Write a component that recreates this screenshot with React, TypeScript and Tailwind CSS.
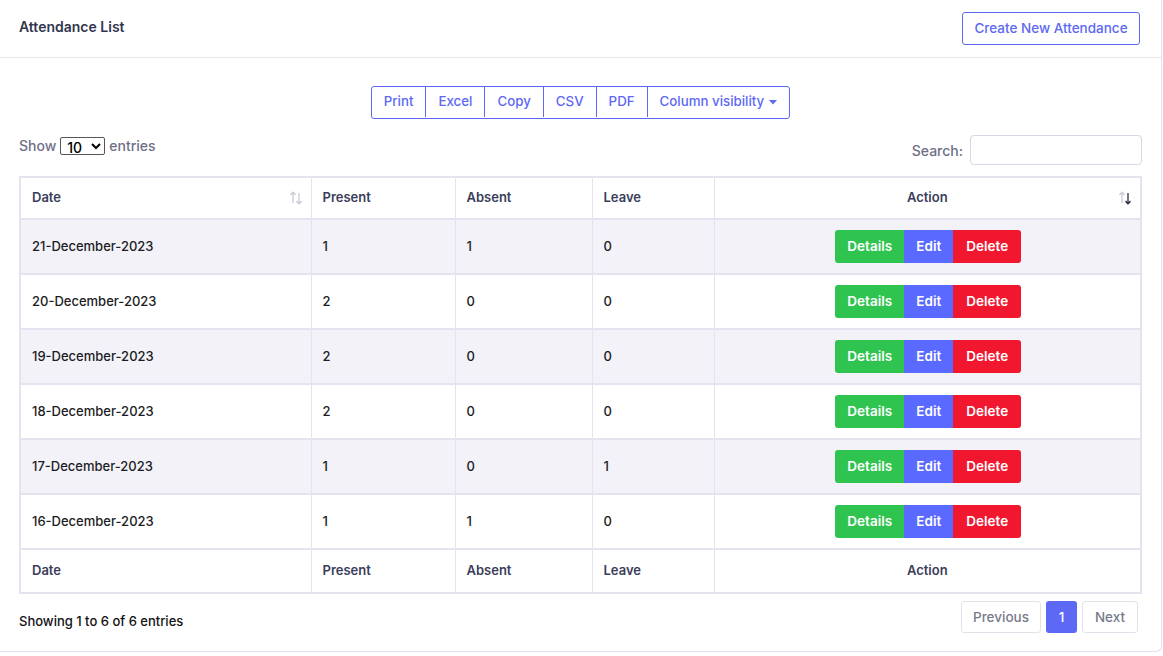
import { useState } from "react";

const rows = [
  { date: "21-December-2023", present: 1, absent: 1, leave: 0 },
  { date: "20-December-2023", present: 2, absent: 0, leave: 0 },
  { date: "19-December-2023", present: 2, absent: 0, leave: 0 },
  { date: "18-December-2023", present: 2, absent: 0, leave: 0 },
  { date: "17-December-2023", present: 1, absent: 0, leave: 1 },
  { date: "16-December-2023", present: 1, absent: 1, leave: 0 },
];

const exportButtons = ["Print", "Excel", "Copy", "CSV", "PDF"];

function SortIcon({ active }: { active?: boolean }) {
  return (
    <svg width="14" height="16" viewBox="0 0 14 16" className="absolute right-[8px] top-1/2 -translate-y-1/2">
      <path d="M4 2 L1.5 5 M4 2 L6.5 5 M4 2 V13" stroke="#c9cbd6" strokeWidth="1.3" fill="none" />
      <path
        d="M10 14 L7.5 11 M10 14 L12.5 11 M10 14 V3"
        stroke={active ? "#2d2f45" : "#c9cbd6"}
        strokeWidth="1.3"
        fill="none"
      />
    </svg>
  );
}

export default function App() {
  const [perPage, setPerPage] = useState("10");

  const th = "border-x border-[#e4e4f0] px-[11px] text-[13px] font-semibold text-[#3b3e5a]";
  const td = "border-x border-[#e4e4f0] px-[11px] text-[13px] font-medium text-[#1c1c24]";

  return (
    <div className="min-h-screen bg-white" style={{ fontFamily: "Inter, 'Noto Sans', sans-serif" }}>
      <div className="h-[652px] w-[1162px] rounded-br-md border-r border-b border-[#e2e2ee] bg-white">
        {/* Header */}
        <div className="flex h-[58px] items-center justify-between border-b border-[#e6e6ef] pl-[19px] pr-[21px]">
          <h1 className="mb-[4px] text-[14px] font-semibold text-[#33364f]">Attendance List</h1>
          <button className="h-[33px] w-[178px] rounded-[3px] border border-[#5d68f4] pb-[1px] text-[13.5px] font-medium text-[#5d68f4]">
            Create New Attendance
          </button>
        </div>

        <div className="px-[19px] pt-[28px]">
          {/* Export buttons */}
          <div className="flex justify-center">
            <div className="flex h-[33px] rounded-[3px] border border-[#5d68f4] pb-[1px]">
              {exportButtons.map((b) => (
                <button
                  key={b}
                  className="border-r border-[#5d68f4] px-[12px] text-[13.3px] font-medium text-[#5d68f4]"
                >
                  {b}
                </button>
              ))}
              <button className="flex items-center gap-[5px] px-[12px] text-[13.3px] font-medium text-[#5d68f4]">
                Column visibility
                <svg width="8" height="5" viewBox="0 0 8 5">
                  <path d="M0 0 H8 L4 4.5 Z" fill="#5d68f4" />
                </svg>
              </button>
            </div>
          </div>

          {/* Show / Search */}
          <div className="mt-[16px] flex items-start justify-between">
            <div className="flex items-center text-[14px] font-medium text-[#6e7087]">
              Show
              <select
                value={perPage}
                onChange={(e) => setPerPage(e.target.value)}
                className="mx-[4px] h-[18px] w-[45px] rounded-[2px] border border-[#555] bg-white pl-[2px] text-[14px] text-black"
              >
                <option>10</option>
                <option>25</option>
                <option>50</option>
                <option>100</option>
              </select>
              entries
            </div>
            <div className="flex items-center gap-[7px] text-[14px] font-medium text-[#6e7087]">
              Search:
              <input className="h-[30px] w-[172px] rounded-[4px] border border-[#d6d6e4] outline-none" />
            </div>
          </div>

          {/* Table */}
          <table className="mt-[11px] w-full border-collapse border-2 border-[#e4e4f0]">
            <colgroup>
              <col className="w-[291px]" />
              <col className="w-[144px]" />
              <col className="w-[137px]" />
              <col className="w-[122px]" />
              <col />
            </colgroup>
            <thead>
              <tr className="h-[42px] border-b-2 border-[#e4e4f0]">
                <th className={`${th} relative text-left`}>
                  Date
                  <SortIcon />
                </th>
                <th className={`${th} text-left`}>Present</th>
                <th className={`${th} text-left`}>Absent</th>
                <th className={`${th} text-left`}>Leave</th>
                <th className={`${th} relative text-center`}>
                  Action
                  <SortIcon active />
                </th>
              </tr>
            </thead>
            <tbody>
              {rows.map((r, i) => (
                <tr
                  key={r.date}
                  className={`h-[55px] border-b-2 border-[#e4e4f0] ${i % 2 === 0 ? "bg-[#f2f2f8]" : "bg-white"}`}
                >
                  <td className={td}>{r.date}</td>
                  <td className={td}>{r.present}</td>
                  <td className={td}>{r.absent}</td>
                  <td className={td}>{r.leave}</td>
                  <td className={`${td} text-center`}>
                    <div className="ml-[2px] inline-flex h-[33px] overflow-hidden rounded-[3px] text-[13.5px] font-semibold text-white">
                      <button className="w-[69px] bg-[#2fc450]">Details</button>
                      <button className="w-[49px] bg-[#5a69ff]">Edit</button>
                      <button className="w-[68px] bg-[#f0172f]">Delete</button>
                    </div>
                  </td>
                </tr>
              ))}
            </tbody>
            <tfoot>
              <tr className="h-[44px]">
                <th className={`${th} text-left`}>Date</th>
                <th className={`${th} text-left`}>Present</th>
                <th className={`${th} text-left`}>Absent</th>
                <th className={`${th} text-left`}>Leave</th>
                <th className={`${th} text-center`}>Action</th>
              </tr>
            </tfoot>
          </table>

          {/* Footer */}
          <div className="mt-[7px] flex items-center justify-between">
            <div className="pt-[9px] text-[13px] font-medium text-[#111]">Showing 1 to 6 of 6 entries</div>
            <div className="mr-[4px] flex items-center gap-[5px] text-[13.5px] font-medium">
              <button className="h-[32px] w-[80px] rounded-[3px] border border-[#e2e2ea] text-[#777a8c]">Previous</button>
              <button className="h-[32px] w-[31px] rounded-[3px] bg-[#5d68f4] text-white">1</button>
              <button className="h-[32px] w-[56px] rounded-[3px] border border-[#e2e2ea] text-[#777a8c]">Next</button>
            </div>
          </div>
        </div>
      </div>
    </div>
  );
}
